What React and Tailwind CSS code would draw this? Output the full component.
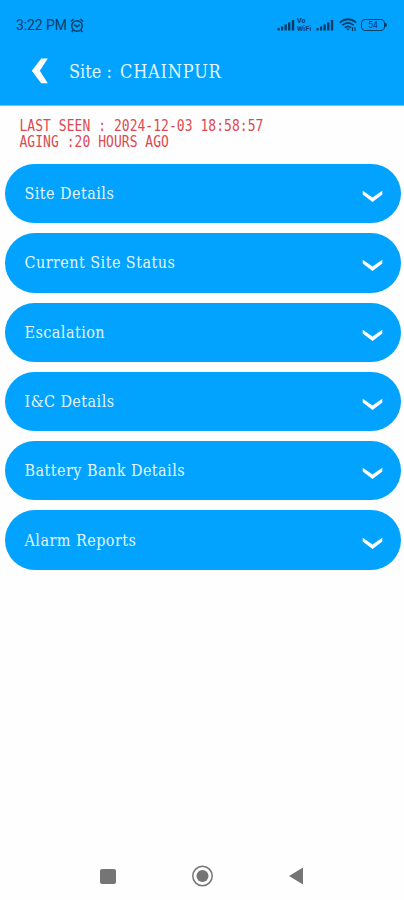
import { useState } from "react";

const sections = [
  "Site Details",
  "Current Site Status",
  "Escalation",
  "I&C Details",
  "Battery Bank Details",
  "Alarm Reports",
];

const Signal = () => (
  <svg width="18" height="12" viewBox="0 0 18 12" fill="#083c66">
    <rect x="0.5" y="9" width="2.2" height="2.5" />
    <rect x="4" y="7.5" width="2.2" height="4" />
    <rect x="7.5" y="5.5" width="2.4" height="6" />
    <rect x="11" y="3.5" width="2.4" height="8" />
    <rect x="14.8" y="1" width="2.4" height="10.5" />
  </svg>
);

const StatusBar = () => {
  return (
    <div className="flex h-[48px] items-center justify-between pl-[16px] pr-[17px] text-[#083c66]">
      <div className="flex items-center gap-[3px] pt-[2px]">
        <span className="font-['Roboto',sans-serif] text-[14px] leading-[16px] tracking-[-0.1px]">
          3:22 PM
        </span>
        <svg width="14" height="15" viewBox="0 0 14 15" fill="none" stroke="#083c66" strokeWidth="1.5">
          <circle cx="7" cy="8" r="5.3" />
          <path d="M0.8 3.5 3.6 1.2M13.2 3.5 10.4 1.2M4.2 6.6 7 8.8 9.8 6.6M3 12.3 1.8 14M11 12.3 12.2 14" />
        </svg>
      </div>
      <div className="flex items-center pt-[2px]">
        <Signal />
        <div className="ml-[2px] flex w-[17px] flex-col font-['Roboto',sans-serif] text-[7px] font-bold leading-[8.5px] tracking-[0.2px]">
          <span>Vo</span>
          <span>WiFi</span>
        </div>
        <div className="ml-[2px]">
          <Signal />
        </div>
        <svg className="ml-[5px]" width="18" height="14" viewBox="0 0 18 14" fill="none" stroke="#083c66" strokeWidth="1.7">
          <path d="M0.8 4.5Q9-2 17.2 4.5M3.3 7.2Q9 2.6 14.7 7.2M5.8 9.7Q9 7 12.2 9.7" />
          <path d="M7 10.5 9 12.8 11 10.5Z" fill="#083c66" stroke="none" />
          <path d="M13.5 9v4M16 9v4" strokeWidth="1.2" />
        </svg>
        <div className="ml-[4px] flex h-[12px] w-[24px] items-center justify-center rounded-[4px] border border-[#083c66] font-['Roboto',sans-serif] text-[8.5px] leading-none">
          54
        </div>
        <div className="h-[4px] w-[2px] rounded-r-sm bg-[#083c66]" />
      </div>
    </div>
  );
};

const Header = () => {
  return (
    <div className="h-[106px] border-b border-[#7cc4fb] bg-[#02a3ff]">
      <StatusBar />
      <div className="flex h-[46px] items-center pl-[31px]">
        <svg width="18" height="26" viewBox="0 0 18 26" fill="white" className="cursor-pointer">
          <path d="M10.2 0.5H16.8L8.8 12.8 16.8 25.2H10.2L0.8 12.8Z" />
        </svg>
        <div className="ml-[20px] flex whitespace-pre font-['DejaVu_Serif_Condensed','DejaVu_Serif',serif] text-[18px] text-[#e3f5ff]">
          <span className="w-[51px]">Site :</span>
          <span className="tracking-[0.8px]">CHAINPUR</span>
        </div>
      </div>
    </div>
  );
};

const Section = ({ title, open, handleClick }) => {
  return (
    <div
      className="flex h-[59.3px] cursor-pointer items-center justify-between rounded-[30px] bg-[#02a3ff] pl-[19.5px] pr-[18px]"
      onClick={handleClick}
    >
      <span className="pt-px font-['DejaVu_Serif_Condensed','DejaVu_Serif',serif] text-[16px] tracking-[0.45px] text-[#e3f5ff]">
        {title}
      </span>
      <svg
        width="21"
        height="13"
        viewBox="0 0 21 13"
        fill="white"
        className={open ? "mt-[6px] rotate-180" : "mt-[6px]"}
      >
        <path d="M0.7 0.8 10.5 7.4 20.3 0.8V4.4L10.5 12 0.7 4.4Z" />
      </svg>
    </div>
  );
};

const NavBar = () => {
  return (
    <div className="flex h-[48px] items-center justify-between pl-[100px] pr-[100px]">
      <div className="h-[15px] w-[16px] rounded-[2px] bg-[#757575]" />
      <svg width="22" height="22" viewBox="0 0 22 22">
        <circle cx="10.5" cy="11" r="9.7" fill="none" stroke="#757575" strokeWidth="1.5" />
        <circle cx="10.5" cy="11" r="6" fill="#757575" />
      </svg>
      <svg width="15" height="18" viewBox="0 0 15 18" fill="#757575">
        <path d="M14 0.5V17.5L0 9Z" />
      </svg>
    </div>
  );
};

const App = () => {
  const [Opened, setOpened] = useState("");

  const handleToggle = (title) => {
    setOpened((prev) => (prev === title ? "" : title));
  };

  return (
    <div className="flex h-screen w-full flex-col overflow-hidden bg-[#fefefe]">
      <Header />
      <div className="flex h-[58px] flex-col pl-[19.5px] pt-[12.4px] font-['DejaVu_Sans_Mono',monospace] text-[13px] leading-[16px] tracking-[0.04px] text-[#dc4a50]">
        <div className="origin-center scale-y-[1.2] whitespace-pre">
          LAST SEEN : 2024-12-03 18:58:57
        </div>
        <div className="origin-center scale-y-[1.2] whitespace-pre">AGING :20 HOURS AGO</div>
      </div>
      <div className="flex flex-1 flex-col gap-[10px] pl-[5px] pr-[3px]">
        {sections.map((title) => (
          <Section
            key={title}
            title={title}
            open={Opened === title}
            handleClick={() => handleToggle(title)}
          />
        ))}
      </div>
      <NavBar />
    </div>
  );
};

export default App;
